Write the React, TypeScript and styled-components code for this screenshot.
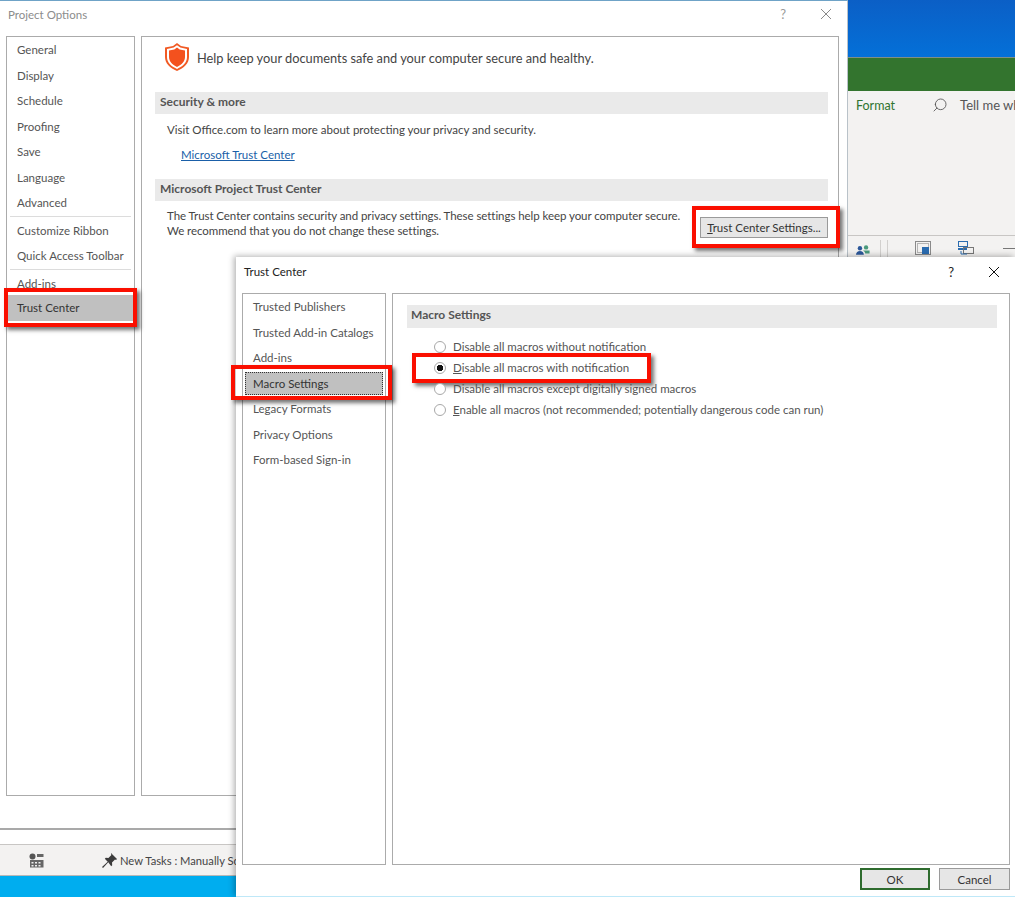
import { createGlobalStyle, styled } from "styled-components";
import { Search } from "lucide-react";

const GlobalStyle = createGlobalStyle`
  html, body {
    margin: 0;
    padding: 0;
    background: #00adef;
    font-family: Lato, "Noto Sans", sans-serif;
    font-size: 11.500px;
    color: #444;
  }
  * { box-sizing: border-box; }
`;

const mainNav = [
  ["General", "Display", "Schedule", "Proofing", "Save", "Language", "Advanced"],
  ["Customize Ribbon", "Quick Access Toolbar"],
  ["Add-ins"],
];

const trustNav = ["Trusted Publishers", "Trusted Add-in Catalogs", "Add-ins"];
const trustNavAfter = ["Legacy Formats", "Privacy Options", "Form-based Sign-in"];

const CloseIcon = ({ color }: { color: string }) => (
  <svg width="12" height="12" viewBox="0 0 12 12" fill="none">
    <path d="M1 1l10 10M11 1L1 11" stroke={color} strokeWidth="1" />
  </svg>
);

const ShieldIcon = () => (
  <svg width="26" height="30" viewBox="0 0 26 30">
    <path d="M13 1l4 3 8 1.5V15c0 6.500-5 11-12 14C6 26 1 21.500 1 15V5.500L9 4z" fill="#f15a24" />
    <path d="M13 3.200l3.300 2.400 6.700 1.300V15c0 5.300-4 9.300-10 11.900C7 24.300 3 20.300 3 15V6.900l6.700-1.300z" fill="#fff" />
    <path d="M13 5.500l2.700 2 5.300 1V15c0 4.300-3.200 7.700-8 9.900C8.200 22.700 5 19.300 5 15V8.500l5.300-1z" fill="#f4511e" />
  </svg>
);

const PinIcon = () => (
  <svg width="15" height="15" viewBox="0 0 15 15">
    <path d="M9 0l6 6-1 1-1-.4-3 3 .2 2.600-1 1L6.300 9.300 1 15l-1-.9 5.700-5.400L2.800 5.800l1-1 2.600.2 3-3L9 1z" fill="#3c3c3c" />
  </svg>
);

const CalendarIcon = () => (
  <svg width="15" height="15" viewBox="0 0 15 15">
    <circle cx="3.500" cy="3.500" r="3" fill="#555" />
    <path d="M8 1h6.500v3H8zM1 7h13.500v7.500H1z" fill="#666" />
    <path d="M2.500 9h2v1.500h-2zM6 9h2v1.500H6zM9.500 9h2v1.500h-2zM2.500 12h2v1.500h-2zM6 12h2v1.500H6zM9.500 12h2v1.500h-2z" fill="#eee" />
  </svg>
);

const PeopleIcon = () => (
  <svg width="16" height="12" viewBox="0 0 16 12">
    <circle cx="4.500" cy="4" r="2.500" fill="#2b579a" />
    <path d="M0 11.500c0-3 2-4.500 4.500-4.500S9 8.500 9 11.500z" fill="#2b579a" />
    <circle cx="11.500" cy="3" r="2.500" fill="#4a9a7c" />
    <path d="M8 6.500h7.500V10h-5c0-1.500-1-2.600-2.500-3.500z" fill="#4a9a7c" />
  </svg>
);

const ViewIconA = () => (
  <svg width="16" height="14" viewBox="0 0 16 14" fill="none">
    <rect x="0.500" y="0.500" width="15" height="13" stroke="#8a8a8a" fill="#f3f2f1" />
    <rect x="2.500" y="2.500" width="11" height="9" stroke="#b5b5b5" />
    <rect x="7" y="6" width="7" height="7" fill="#2b6cb0" />
  </svg>
);

const ViewIconB = () => (
  <svg width="16" height="14" viewBox="0 0 16 14" fill="none">
    <rect x="0.500" y="0.500" width="9" height="5" stroke="#2b6cb0" />
    <path d="M0 8h9" stroke="#2b6cb0" strokeWidth="2" />
    <rect x="5.500" y="6.500" width="10" height="6" stroke="#777" />
    <path d="M3 10v3h6" stroke="#2b6cb0" />
  </svg>
);

export default function App() {
  return (
    <>
      <GlobalStyle />
      <Desktop>
        <BlueBand />
        <GreenBar />
        <Ribbon>
          <RibbonTabs>
            <FormatTab>Format</FormatTab>
            <SearchIcon>
              <Search size={16} strokeWidth={1.3} color="#555" />
            </SearchIcon>
            <TellMe>Tell me what</TellMe>
          </RibbonTabs>
        </Ribbon>
        <RibbonStrip>
          <PeopleIcon />
          <StripSep />
          <StripSep />
          <StripIcon>
            <ViewIconA />
          </StripIcon>
          <StripIcon>
            <ViewIconB />
          </StripIcon>
          <StripDash />
        </RibbonStrip>
        <SheetArea />
        <StatusBar>
          <CalendarIcon />
          <StatusTask>
            <PinIcon />
            <span>New Tasks : Manually Scheduled</span>
          </StatusTask>
        </StatusBar>
        <Taskbar />

        <ProjectWindow>
          <TitleBar>
            <DimTitle>Project Options</DimTitle>
            <TitleButtons>
              <Help $dim>?</Help>
              <CloseIcon color="#8a8a8a" />
            </TitleButtons>
          </TitleBar>
          <WindowBody>
            <NavPanel>
              {mainNav.map((group, i) => (
                <NavGroup key={i} $last={i === mainNav.length - 1}>
                  {group.map((label) => (
                    <NavItem key={label}>{label}</NavItem>
                  ))}
                </NavGroup>
              ))}
              <NavItem $selected>
                Trust Center
                <Highlight $inset="-7px -3px -6px -3px" />
              </NavItem>
            </NavPanel>
            <ContentPanel>
              <Intro>
                <ShieldIcon />
                <IntroText>Help keep your documents safe and your computer secure and healthy.</IntroText>
              </Intro>
              <SectionHeader>Security &amp; more</SectionHeader>
              <SectionText>Visit Office.com to learn more about protecting your privacy and security.</SectionText>
              <TrustLink>Microsoft Trust Center</TrustLink>
              <SectionHeader>Microsoft Project Trust Center</SectionHeader>
              <TrustRow>
                <TrustCopy>
                  The Trust Center contains security and privacy settings. These settings help keep your computer secure.
                  <br />
                  We recommend that you do not change these settings.
                </TrustCopy>
                <SettingsButton>
                  <u>T</u>rust Center Settings...
                  <Highlight $inset="-12px -13px -11px -9px" />
                </SettingsButton>
              </TrustRow>
            </ContentPanel>
          </WindowBody>
        </ProjectWindow>

        <TrustWindow>
          <TrustTitleBar>
            <TrustTitle>Trust Center</TrustTitle>
            <TitleButtons>
              <Help>?</Help>
              <CloseIcon color="#111" />
            </TitleButtons>
          </TrustTitleBar>
          <TrustBody>
            <TrustNav>
              {trustNav.map((label) => (
                <TrustNavItem key={label}>{label}</TrustNavItem>
              ))}
              <TrustSelected>
                Macro Settings
                <Highlight $inset="-8px -10px -6px -15px" />
              </TrustSelected>
              {trustNavAfter.map((label) => (
                <TrustNavItem key={label}>{label}</TrustNavItem>
              ))}
            </TrustNav>
            <MacroPanel>
              <MacroHeader>Macro Settings</MacroHeader>
              <RadioList>
                <RadioRow>
                  <Radio />
                  Disable all macros without notification
                </RadioRow>
                <RadioRow>
                  <Radio $checked />
                  <span>
                    <u>D</u>isable all macros with notification
                  </span>
                  <Highlight $inset="-4.500px auto -4.500px -22px" $width="239px" />
                </RadioRow>
                <RadioRow>
                  <Radio />
                  Disable all macros except digitally signed macros
                </RadioRow>
                <RadioRow>
                  <Radio />
                  <span>
                    <u>E</u>nable all macros (not recommended; potentially dangerous code can run)
                  </span>
                </RadioRow>
              </RadioList>
            </MacroPanel>
          </TrustBody>
          <DialogFooter>
            <DialogButton $primary>OK</DialogButton>
            <DialogButton>Cancel</DialogButton>
          </DialogFooter>
        </TrustWindow>
      </Desktop>
    </>
  );
}

const Desktop = styled.div`
  position: relative;
  width: 1015px;
  height: 897px;
  overflow: hidden;
  display: flex;
  flex-direction: column;
  background: #fff;
`;

const BlueBand = styled.div`
  height: 58px;
  flex: none;
  background: linear-gradient(180deg, #0b5fc6, #0470d8);
  border-bottom: 1px solid #7f8f86;
`;

const GreenBar = styled.div`
  height: 33px;
  flex: none;
  background: #33742e;
`;

const Ribbon = styled.div`
  height: 145px;
  flex: none;
  background: #f3f2f1;
  border-bottom: 1px solid #c8c6c4;
`;

const RibbonTabs = styled.div`
  display: flex;
  align-items: center;
  height: 28px;
  padding-left: 856px;
`;

const FormatTab = styled.span`
  color: #2f7430;
  font-size: 12.500px;
`;

const SearchIcon = styled.span`
  display: flex;
  margin-left: 37px;
  transform: scaleX(-1);
`;

const TellMe = styled.span`
  margin-left: 12px;
  white-space: nowrap;
  font-size: 13px;
  color: #555;
`;

const RibbonStrip = styled.div`
  height: 30px;
  flex: none;
  display: flex;
  align-items: flex-start;
  padding: 8px 0 0 856px;
  background: #f3f2f1;
`;

const StripSep = styled.div`
  width: 1px;
  height: 22px;
  margin: -4px 0 0 6px;
  background: #d2d0ce;

  &:nth-of-type(1) {
    margin-left: 10px;
  }
`;

const StripIcon = styled.div`
  margin: -3px 0 0 27px;

  & + & {
    margin-left: 27px;
  }
`;

const StripDash = styled.div`
  width: 14px;
  height: 1px;
  margin: 4px 0 0 29px;
  background: #777;
`;

const SheetArea = styled.div`
  flex: 1;
  background: #fff;
  border-bottom: 3px solid #a9a9a9;
`;

const StatusBar = styled.div`
  height: 32px;
  flex: none;
  display: flex;
  align-items: center;
  margin-top: 14px;
  padding-left: 29px;
  background: #f3f2f1;
  border-top: 1px solid #c8c6c4;
  border-bottom: 1px solid #b8b8b8;
`;

const StatusTask = styled.div`
  display: flex;
  align-items: center;
  gap: 3px;
  margin-left: 58px;
  font-size: 11.200px;
  white-space: nowrap;
  color: #444;
`;

const Taskbar = styled.div`
  height: 21px;
  flex: none;
  background: #00adef;
`;

const ProjectWindow = styled.div`
  position: absolute;
  left: 0;
  top: 0;
  width: 848px;
  height: 828px;
  display: flex;
  flex-direction: column;
  background: #fff;
  border-top: 1px solid #6fa3c7;
  border-right: 1px solid #b9c2c9;
`;

const TitleBar = styled.div`
  height: 35px;
  flex: none;
  display: flex;
  align-items: center;
  justify-content: space-between;
  padding: 0 15px 9px 8px;
`;

const DimTitle = styled.div`
  color: #8c8c8c;
`;

const TitleButtons = styled.div`
  display: flex;
  align-items: center;
  gap: 34px;
`;

const Help = styled.span<{ $dim?: boolean }>`
  font-size: 13px;
  color: ${(p) => (p.$dim ? "#9a9a9a" : "#222")};
`;

const WindowBody = styled.div`
  display: flex;
  gap: 6px;
  height: 760px;
  padding: 0 8px 0 6px;
`;

const NavPanel = styled.nav`
  width: 129px;
  flex: none;
  padding-top: 0;
  border: 1px solid #ababab;
  color: #555;
`;

const NavGroup = styled.div<{ $last?: boolean }>`
  margin: 0 3px ${(p) => (p.$last ? "0" : "1px")};
  border-bottom: ${(p) => (p.$last ? "none" : "1px solid #dcdcdc")};
  position: relative;
  top: 0;
`;

const NavItem = styled.div<{ $selected?: boolean }>`
  position: relative;
  height: 25.500px;
  display: flex;
  align-items: center;
  padding-left: 7px;
  color: #555;
  white-space: nowrap;
  background: ${(p) => (p.$selected ? "#c0c0c0" : "transparent")};
  ${(p) => p.$selected && "padding-left: 10px; color: #333; margin-top: -1px;"}
`;

const Highlight = styled.span<{ $inset: string; $width?: string }>`
  position: absolute;
  inset: ${(p) => p.$inset};
  width: ${(p) => p.$width ?? "auto"};
  border: 4px solid #fa0f00;
  box-shadow: 3px 3px 4px rgba(0, 0, 0, 0.55);
  pointer-events: none;
`;

const ContentPanel = styled.main`
  flex: 1;
  min-width: 0;
  padding: 0 10px 0 13px;
  border: 1px solid #ababab;
`;

const Intro = styled.div`
  height: 55px;
  display: flex;
  align-items: flex-start;
  gap: 7px;
  padding: 5px 0 0 9px;
`;

const IntroText = styled.div`
  font-size: 12.800px;
  margin-top: 8px;
  color: #444;
`;

const SectionHeader = styled.div`
  height: 22px;
  display: flex;
  align-items: center;
  padding: 0 0 3px 5px;
  background: #eaeaea;
  font-size: 12px;
  font-weight: 700;
  color: #555;
`;

const SectionText = styled.div`
  padding: 9px 0 0 12px;
  height: 31px;
`;

const TrustLink = styled.a`
  display: block;
  height: 34px;
  padding: 3px 0 0 26px;
  color: #1a5fa8;
  text-decoration: underline;
`;

const TrustRow = styled.div`
  display: flex;
  align-items: flex-start;
  justify-content: space-between;
`;

const TrustCopy = styled.div`
  padding: 8px 0 0 12px;
  line-height: 14.500px;
  letter-spacing: -0.06px;
  white-space: nowrap;
`;

const SettingsButton = styled.button`
  position: relative;
  width: 128px;
  height: 21px;
  margin-top: 16px;
  padding: 0;
  font: inherit;
  color: #333;
  white-space: nowrap;
  background: #e6e6e6;
  border: 1px solid #9a9a9a;
`;

const TrustWindow = styled.div`
  position: absolute;
  left: 236px;
  top: 257px;
  width: 779px;
  height: 640px;
  display: flex;
  flex-direction: column;
  background: #fff;
  box-shadow: -2px -1px 6px rgba(0, 0, 0, 0.3);
  border-bottom: 1px solid #bfe8f8;
`;

const TrustTitleBar = styled.div`
  height: 36px;
  flex: none;
  display: flex;
  align-items: center;
  justify-content: space-between;
  padding: 0 15px 7px 8px;
`;

const TrustTitle = styled.div`
  color: #222;
`;

const TrustBody = styled.div`
  display: flex;
  gap: 6px;
  height: 572px;
  padding: 0 5px 0 6px;
`;

const TrustNav = styled.nav`
  width: 144px;
  flex: none;
  border: 1px solid #ababab;
`;

const TrustNavItem = styled(NavItem)`
  padding-left: 10px;
`;

const TrustSelected = styled.div`
  position: relative;
  height: 23px;
  margin: 1px 2px 1.500px 2px;
  display: flex;
  align-items: center;
  padding-left: 7px;
  background: #c0c0c0;
  border: 1px dotted #333;
  color: #333;
`;

const MacroPanel = styled.main`
  flex: 1;
  padding: 11px 12px 0 14px;
  border: 1px solid #ababab;
`;

const MacroHeader = styled.div`
  height: 23px;
  display: flex;
  align-items: center;
  padding: 0 0 5px 4px;
  background: #eaeaea;
  font-size: 12px;
  font-weight: 700;
  color: #555;
`;

const RadioList = styled.div`
  padding: 8px 0 0 27px;
`;

const RadioRow = styled.div`
  position: relative;
  height: 21px;
  display: flex;
  align-items: center;
  gap: 7px;
  white-space: nowrap;
  color: #555;
`;

const Radio = styled.span<{ $checked?: boolean }>`
  width: 12px;
  height: 12px;
  flex: none;
  border-radius: 50%;
  border: 1px solid #a8a8a8;
  background: ${(p) =>
    p.$checked ? "radial-gradient(circle, #111 0 3px, #fff 3.500px)" : "#fff"};
`;

const DialogFooter = styled.div`
  flex: 1;
  display: flex;
  justify-content: flex-end;
  align-items: flex-start;
  gap: 9px;
  padding: 3px 5px 0 0;
`;

const DialogButton = styled.button<{ $primary?: boolean }>`
  width: ${(p) => (p.$primary ? "70px" : "71px")};
  height: 22px;
  padding: 0;
  font: inherit;
  color: #333;
  background: #e6e6e6;
  border: ${(p) => (p.$primary ? "2px solid #2e6b2e" : "1px solid #9a9a9a")};
`;
